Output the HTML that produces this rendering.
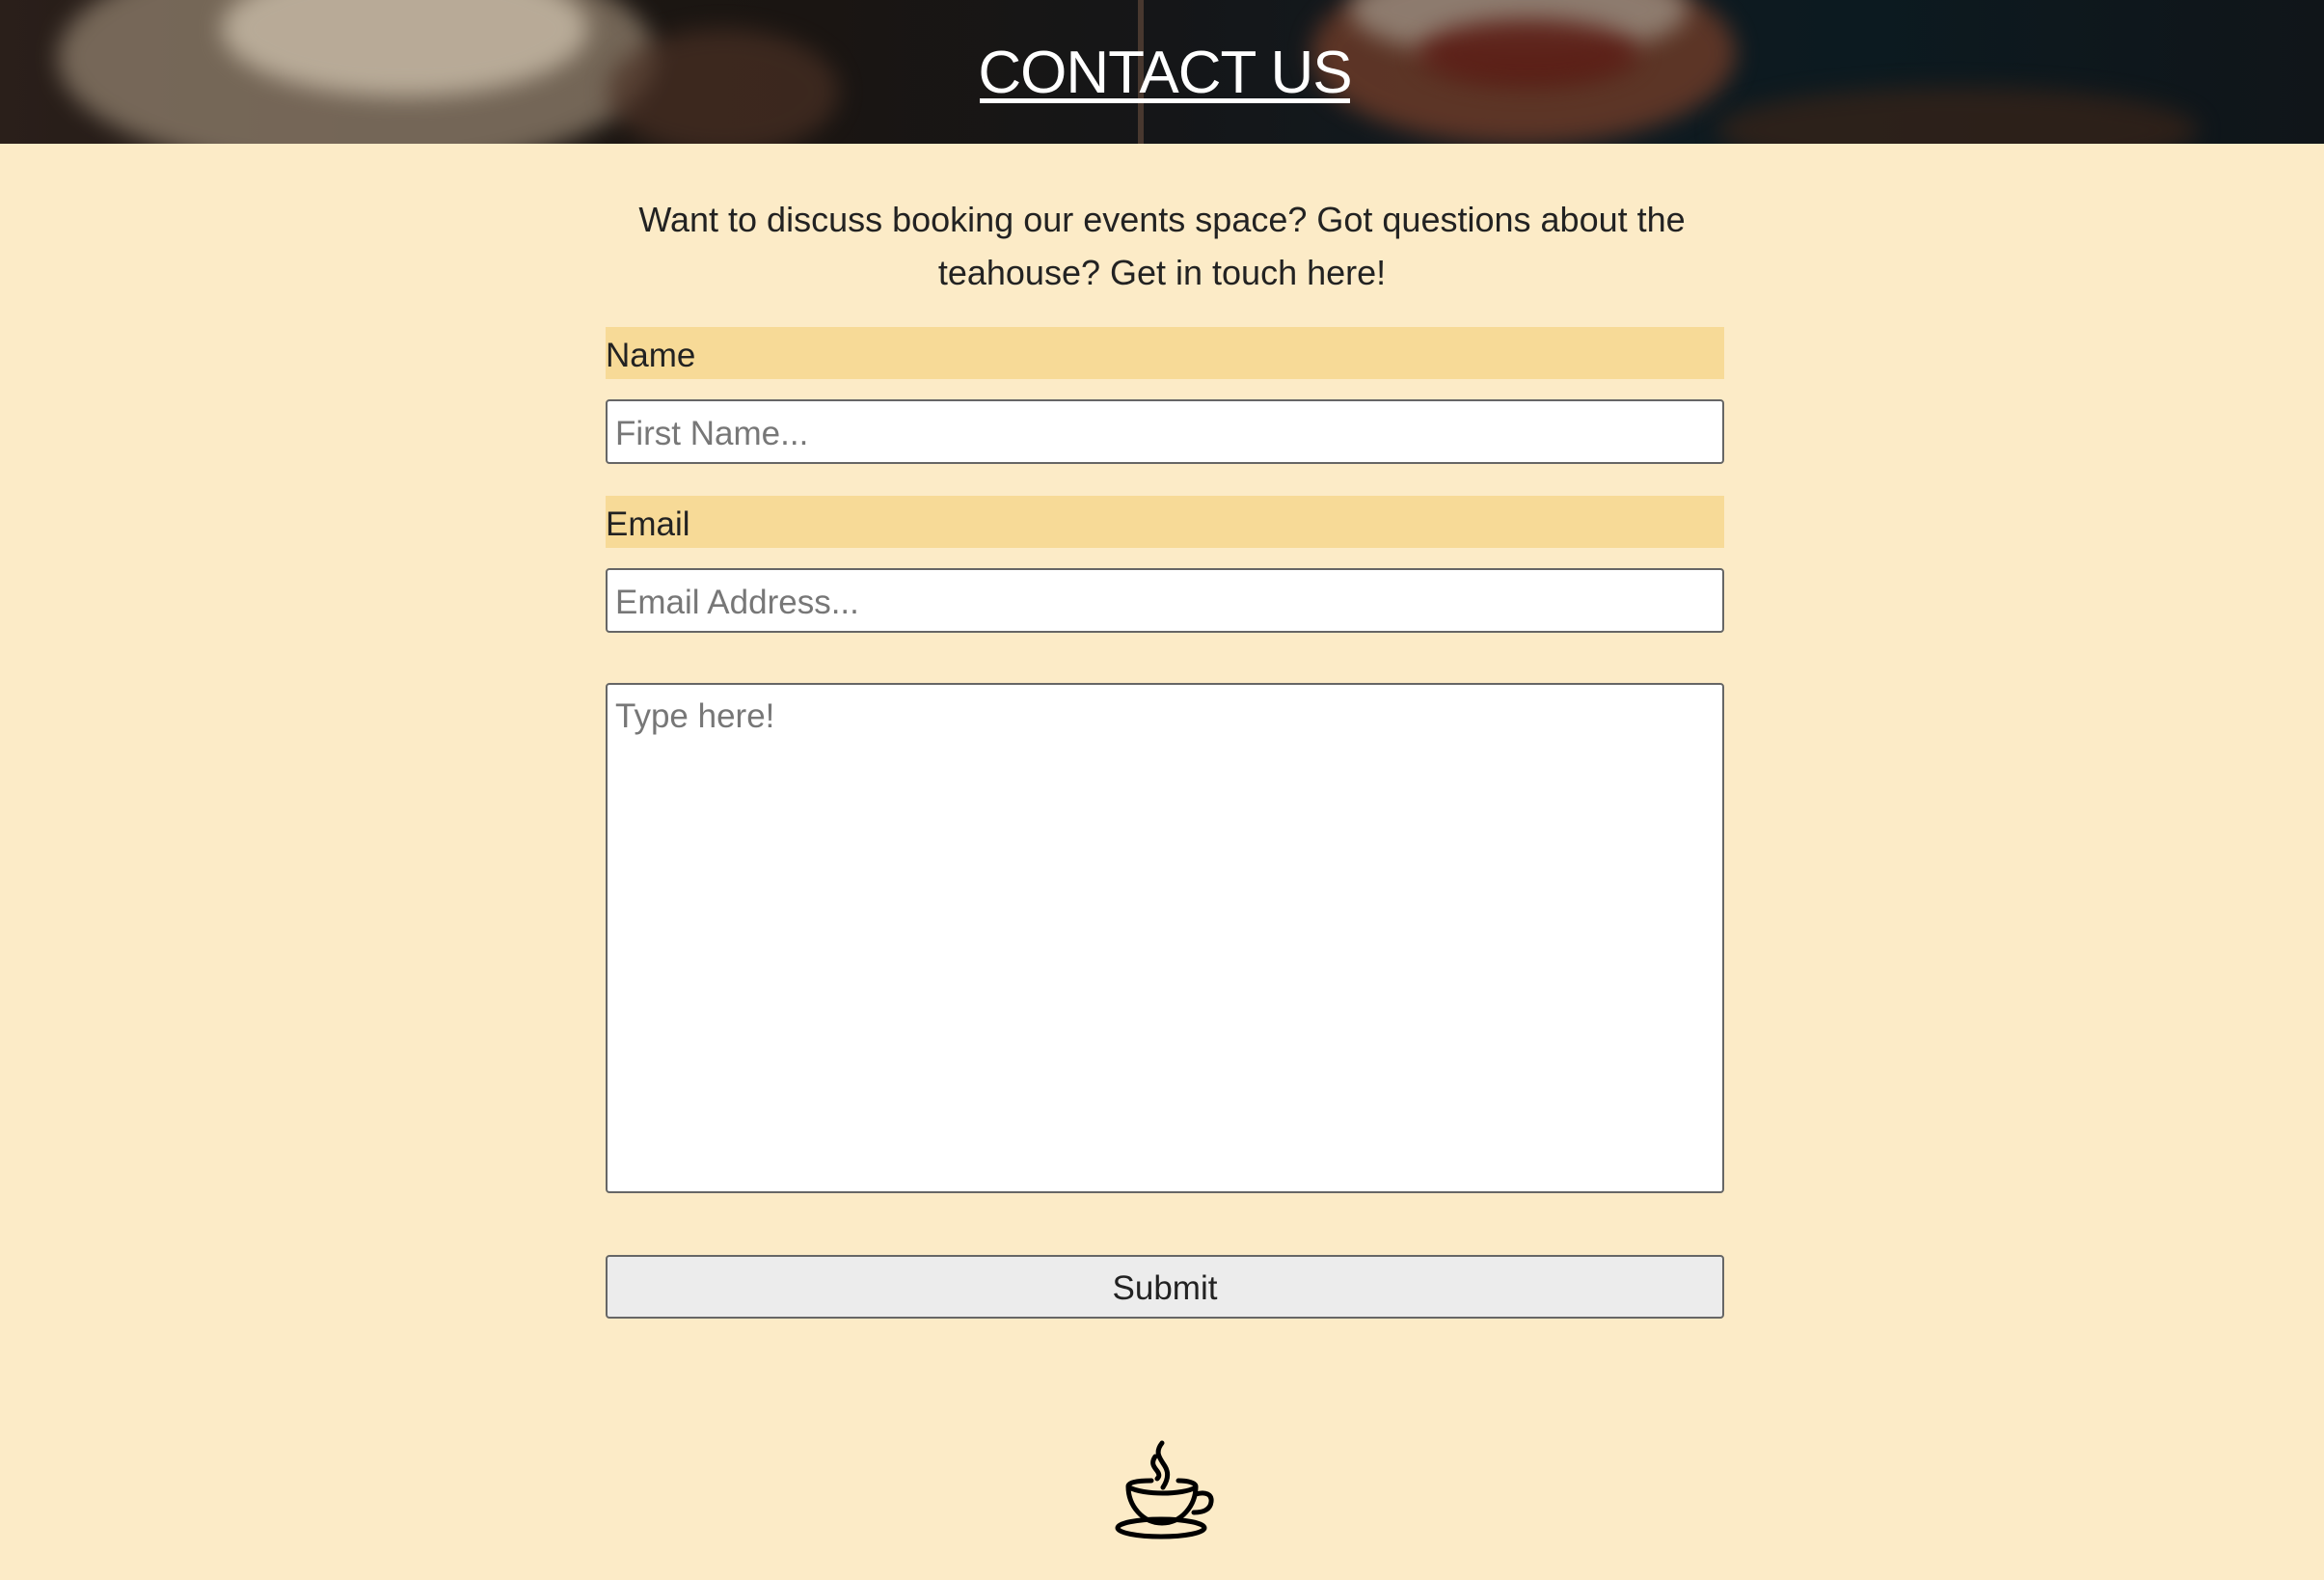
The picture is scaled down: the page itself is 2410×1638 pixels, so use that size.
<!DOCTYPE html>
<html><head><meta charset="utf-8"><style>
*{box-sizing:border-box;margin:0;padding:0}
html,body{width:2410px;height:1638px;overflow:hidden;background:#fcebc7;font-family:"Liberation Sans",sans-serif;color:#222}
.hdr{position:absolute;left:0;top:0;width:2410px;height:149px;overflow:hidden;
background:linear-gradient(90deg,#2a1f1a 0%,#1d1713 20%,#1a1512 35%,#151618 50%,#101a20 65%,#0c1a20 80%,#101519 100%)}
.b{position:absolute;border-radius:50%;filter:blur(12px)}
.title{position:absolute;left:0;top:38px;width:2416px;text-align:center;color:#fff;font-size:62px;font-weight:normal;white-space:nowrap;line-height:76px;letter-spacing:-1px}
.ul{position:absolute;left:1016px;top:102px;width:384px;height:5px;background:#fff}
p.intro{position:absolute;left:620px;top:200px;width:1170px;text-align:center;font-size:36px;line-height:55px;color:#222}
.lab{position:absolute;left:628px;width:1160px;height:54px;background:#f7da97;font-size:35px;line-height:60px;color:#222}
.in{position:absolute;left:628px;width:1160px;background:#fff;border:2px solid #666;border-radius:4px;font-size:35px;color:#777;padding-left:8px}
.btn{position:absolute;left:628px;top:1301px;width:1160px;height:66px;background:#ececec;border:2px solid #666;border-radius:4px;font-size:35px;text-align:center;line-height:66px;color:#222}
</style></head><body>
<div class="hdr">
 <div class="b" style="left:60px;top:-60px;width:620px;height:240px;background:#8a7a68;opacity:.8"></div>
 <div class="b" style="left:230px;top:-40px;width:380px;height:140px;background:#c9bca8;opacity:.8"></div>
 <div class="b" style="left:630px;top:30px;width:240px;height:130px;background:#4a3024;opacity:.7"></div>
 <div class="b" style="left:1360px;top:-40px;width:440px;height:190px;background:#6a3a28;opacity:.85"></div>
 <div class="b" style="left:1400px;top:-40px;width:350px;height:100px;background:#9a8d80;opacity:.8"></div>
 <div class="b" style="left:1470px;top:20px;width:230px;height:70px;background:#5a1c14;opacity:.9"></div>
 <div class="b" style="left:1780px;top:90px;width:500px;height:90px;background:#3a2418;opacity:.7"></div>
 <div style="position:absolute;left:1180px;top:0;width:6px;height:149px;background:#6a5040;opacity:.6"></div>
 <div class="title">CONTACT US</div>
 <div class="ul"></div>
</div>
<p class="intro">Want to discuss booking our events space? Got questions about the teahouse? Get in touch here!</p>
<div class="lab" style="top:339px">Name</div>
<div class="in" style="top:414px;height:67px;line-height:67px">First Name...</div>
<div class="lab" style="top:514px">Email</div>
<div class="in" style="top:589px;height:67px;line-height:67px">Email Address...</div>
<div class="in" style="top:708px;height:529px;line-height:54px;padding-top:6px">Type here!</div>
<div class="btn">Submit</div>
<svg style="position:absolute;left:1130px;top:1480px" width="150" height="130" viewBox="0 0 150 130" fill="none" stroke="#000" stroke-width="5" stroke-linecap="round">
 <path d="M75 16c-8 10-2 16 3 24c5 8 2 16-2 22"/>
 <path d="M68 30c-5 7-1 11 2 15c3 4 2 6 0 8"/>
 <path d="M64 55c-16 0-24 2-24 6 0 20 15 38 35 38s35-18 35-38c0-4-9-6-18-6"/>
 <path d="M41 62c15 8 55 8 69 0"/>
 <path d="M110 69c10-3 17 0 16 8-1 8-8 11-18 11"/>
 <ellipse cx="74" cy="104" rx="45" ry="9"/>
</svg>
</body></html>
